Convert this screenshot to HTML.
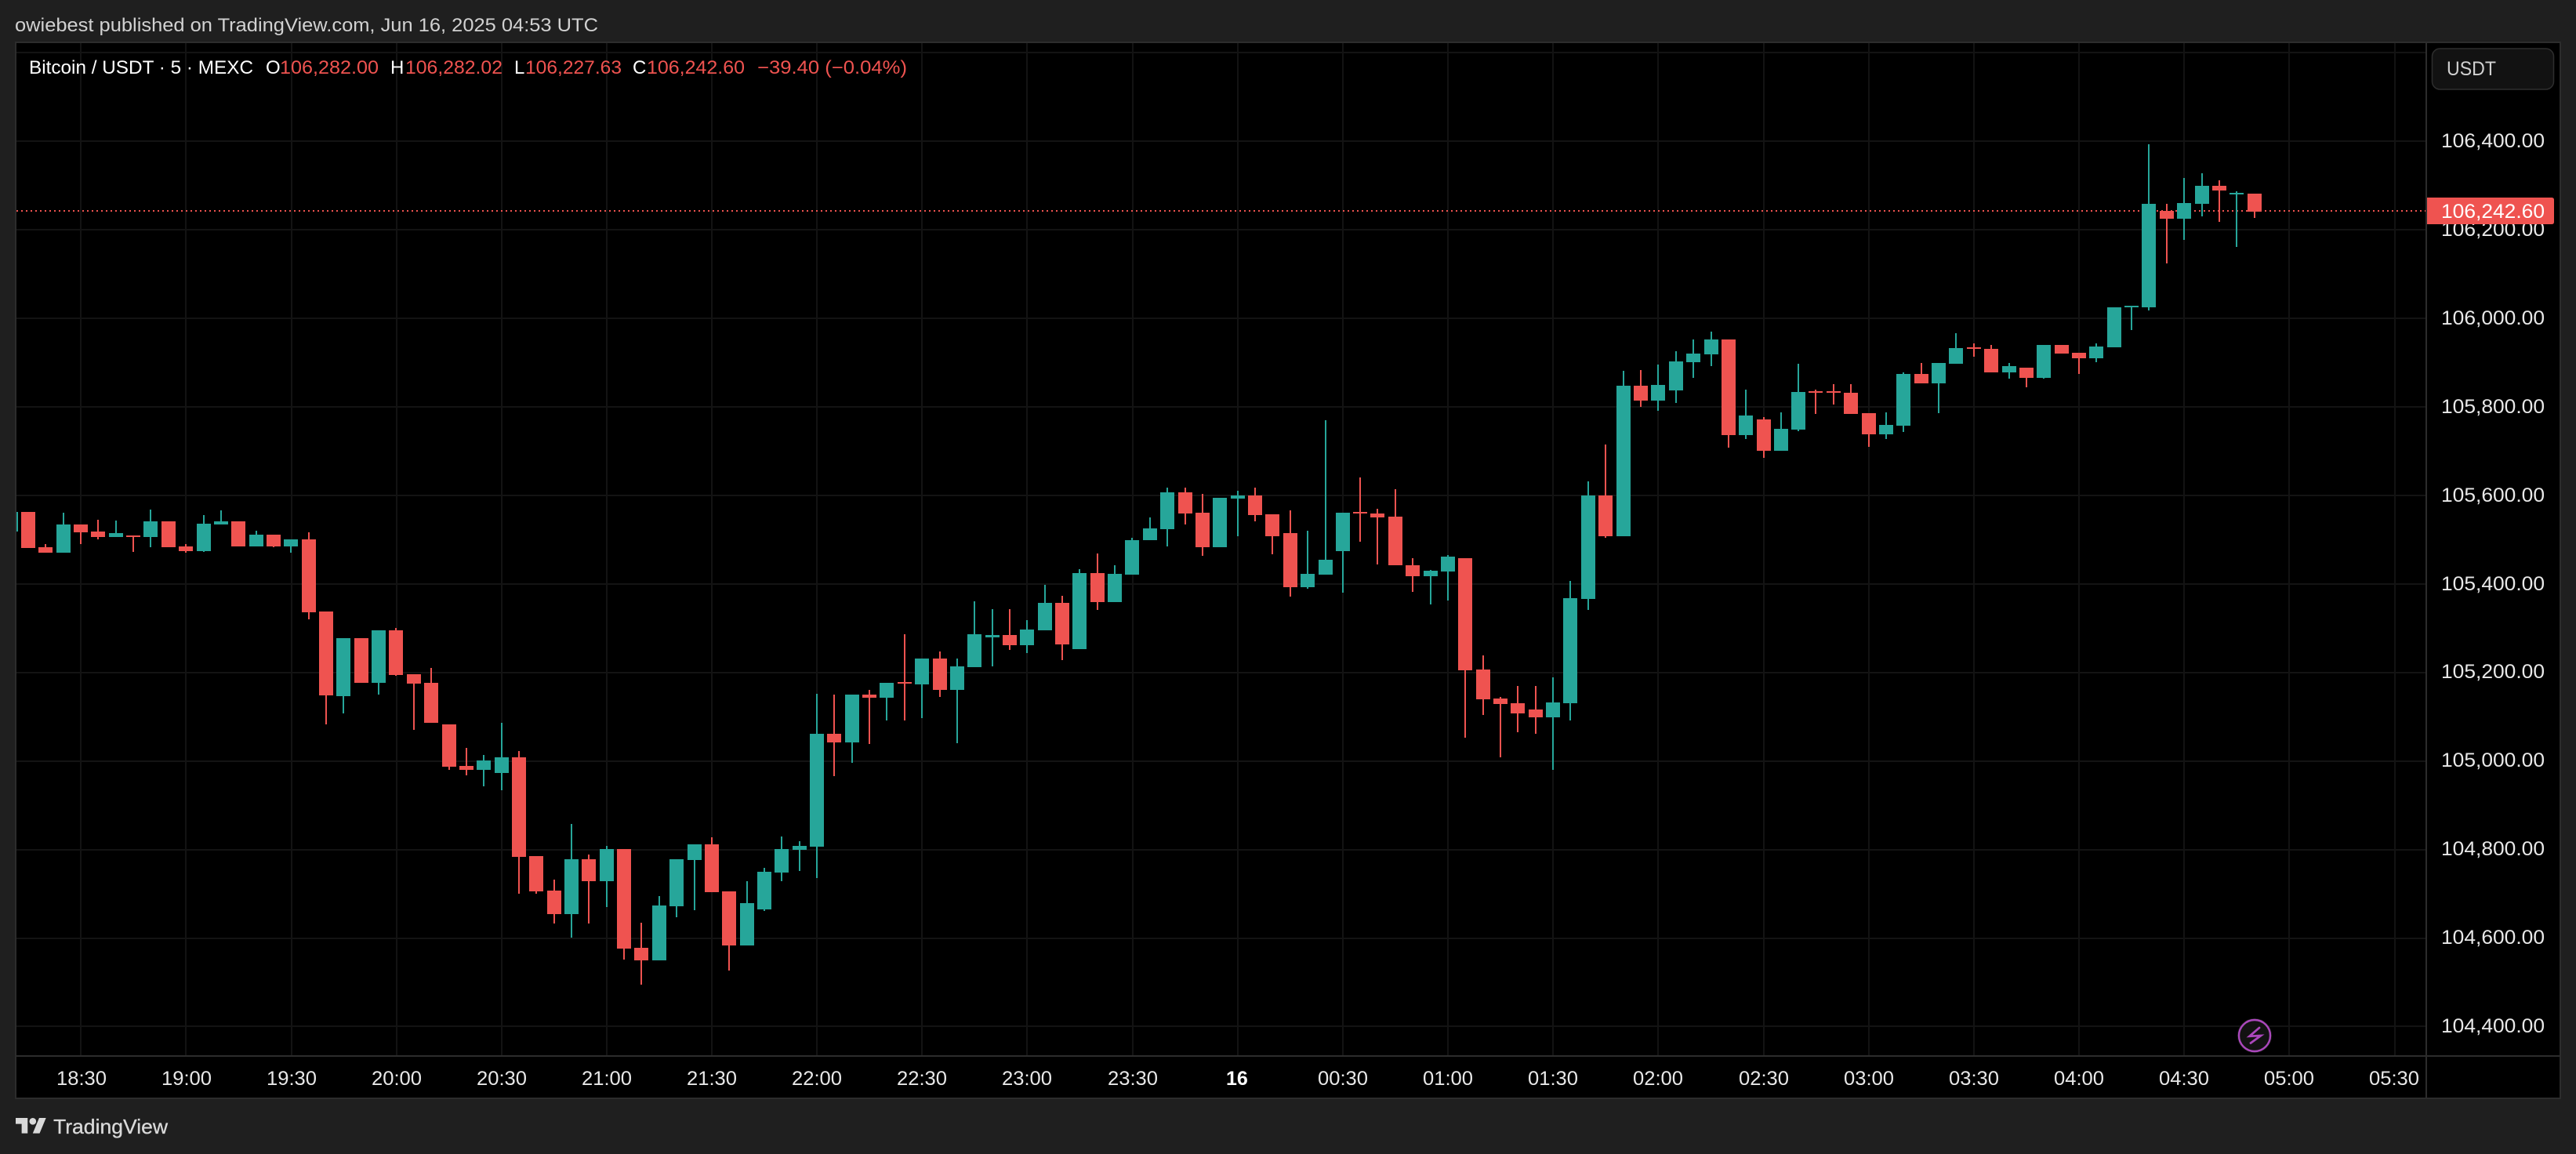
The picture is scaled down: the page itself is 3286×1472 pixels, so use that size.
<!DOCTYPE html>
<html lang="en">
<head>
<meta charset="utf-8">
<title>Bitcoin / USDT chart</title>
<style>
html,body{margin:0;padding:0;background:#1f1f1f;width:3286px;height:1472px;overflow:hidden}
svg{display:block;font-family:"Liberation Sans",sans-serif}
.p{font-size:25px;fill:#e8e8e8}
.t{font-size:25px;fill:#e8e8e8}
.l{font-size:24px;fill:#fff}
.v{font-size:24px;fill:#ef5350}
</style>
</head>
<body>
<svg xmlns="http://www.w3.org/2000/svg" width="3286" height="1472" viewBox="0 0 3286 1472">
<rect width="3286" height="1472" fill="#1f1f1f"/>
<rect x="20" y="54" width="3246" height="1347" fill="#000"/>
<!-- grid -->
<path fill="#131313" d="M21 66h3074v2H21zM21 179h3074v2H21zM21 292h3074v2H21zM21 405h3074v2H21zM21 518h3074v2H21zM21 631h3074v2H21zM21 744h3074v2H21zM21 857h3074v2H21zM21 970h3074v2H21zM21 1083h3074v2H21zM21 1196h3074v2H21zM21 1308h3074v2H21z
M102 54h2v1292h-2zM236 54h2v1292h-2zM371 54h2v1292h-2zM505 54h2v1292h-2zM639 54h2v1292h-2zM773 54h2v1292h-2zM907 54h2v1292h-2zM1041 54h2v1292h-2zM1175 54h2v1292h-2zM1309 54h2v1292h-2zM1444 54h2v1292h-2zM1578 54h2v1292h-2zM1712 54h2v1292h-2zM1846 54h2v1292h-2zM1980 54h2v1292h-2zM2114 54h2v1292h-2zM2249 54h2v1292h-2zM2383 54h2v1292h-2zM2517 54h2v1292h-2zM2651 54h2v1292h-2zM2785 54h2v1292h-2zM2919 54h2v1292h-2zM3054 54h2v1292h-2z"/>
<!-- last price dotted line -->
<line x1="21" y1="269" x2="3095" y2="269" stroke="#ef5350" stroke-width="2" stroke-dasharray="2 4"/>
<!-- green candles -->
<path fill="#26a69a" d="M21 653h2V678h-2z
M72 669h18V705h-18zM80 654h2V705h-2z
M139 680h18V685h-18zM147 664h2V685h-2z
M183 665h18V685h-18zM191 650h2V698h-2z
M251 668h18V703h-18zM259 657h2V704h-2z
M273 665h18V669h-18zM281 651h2V669h-2z
M318 682h18V697h-18zM326 677h2V697h-2z
M362 688h18V697h-18zM370 688h2V705h-2z
M429 814h18V888h-18zM437 814h2V910h-2z
M474 804h18V871h-18zM482 804h2V886h-2z
M608 970h18V982h-18zM616 963h2V1003h-2z
M631 966h18V986h-18zM639 922h2V1008h-2z
M720 1096h18V1166h-18zM728 1051h2V1196h-2z
M765 1083h18V1124h-18zM773 1079h2V1157h-2z
M832 1155h18V1225h-18zM840 1143h2V1225h-2z
M854 1096h18V1156h-18zM862 1096h2V1170h-2z
M877 1077h18V1097h-18zM885 1077h2V1161h-2z
M944 1152h18V1206h-18zM952 1124h2V1206h-2z
M966 1112h18V1160h-18zM974 1107h2V1162h-2z
M988 1083h18V1113h-18zM996 1067h2V1124h-2z
M1011 1079h18V1084h-18zM1019 1073h2V1111h-2z
M1033 936h18V1080h-18zM1041 885h2V1120h-2z
M1078 886h18V947h-18zM1086 886h2V973h-2z
M1122 871h18V890h-18zM1130 871h2V919h-2z
M1167 840h18V873h-18zM1175 840h2V916h-2z
M1212 850h18V880h-18zM1220 840h2V948h-2z
M1234 809h18V851h-18zM1242 767h2V851h-2z
M1257 810h18V813h-18zM1265 777h2V850h-2z
M1301 803h18V823h-18zM1309 791h2V833h-2z
M1324 769h18V804h-18zM1332 746h2V804h-2z
M1368 731h18V828h-18zM1376 726h2V828h-2z
M1413 732h18V768h-18zM1421 721h2V768h-2z
M1435 689h18V733h-18zM1443 686h2V733h-2z
M1458 674h18V689h-18zM1466 660h2V689h-2z
M1480 628h18V675h-18zM1488 622h2V697h-2z
M1547 635h18V698h-18z
M1570 632h18V636h-18zM1578 626h2V684h-2z
M1659 732h18V749h-18zM1667 677h2V751h-2z
M1682 714h18V733h-18zM1690 536h2V733h-2z
M1704 654h18V703h-18zM1712 654h2V756h-2z
M1816 728h18V735h-18zM1824 727h2V771h-2z
M1838 710h18V729h-18zM1846 708h2V766h-2z
M1972 896h18V915h-18zM1980 864h2V982h-2z
M1994 763h18V897h-18zM2002 741h2V919h-2z
M2017 632h18V764h-18zM2025 614h2V778h-2z
M2062 492h18V684h-18zM2070 473h2V684h-2z
M2106 491h18V511h-18zM2114 465h2V524h-2z
M2129 461h18V498h-18zM2137 448h2V514h-2z
M2151 451h18V462h-18zM2159 433h2V482h-2z
M2174 433h18V452h-18zM2182 423h2V467h-2z
M2218 530h18V555h-18zM2226 497h2V560h-2z
M2263 547h18V575h-18zM2271 526h2V575h-2z
M2285 500h18V548h-18zM2293 464h2V550h-2z
M2397 542h18V554h-18zM2405 526h2V560h-2z
M2419 477h18V543h-18zM2427 475h2V551h-2z
M2464 463h18V489h-18zM2472 463h2V527h-2z
M2486 444h18V464h-18zM2494 425h2V464h-2z
M2554 467h18V475h-18zM2562 463h2V483h-2z
M2598 440h18V482h-18zM2606 440h2V483h-2z
M2665 442h18V457h-18zM2673 438h2V462h-2z
M2688 392h18V443h-18z
M2710 390h18V392h-18zM2718 390h2V421h-2z
M2732 260h18V392h-18zM2740 184h2V396h-2z
M2777 259h18V279h-18zM2785 227h2V306h-2z
M2800 237h18V260h-18zM2808 221h2V276h-2z
M2844 246h18V248h-18zM2852 244h2V315h-2z"/>
<!-- red candles -->
<path fill="#ef5350" d="M27 653h18V699h-18z
M49 698h18V705h-18zM57 694h2V705h-2z
M94 669h18V679h-18zM102 669h2V694h-2z
M116 678h18V685h-18zM124 663h2V688h-2z
M161 683h18V685h-18zM169 683h2V704h-2z
M206 665h18V698h-18z
M228 697h18V703h-18zM236 694h2V705h-2z
M295 665h18V697h-18z
M340 682h18V697h-18zM348 682h2V698h-2z
M385 688h18V781h-18zM393 679h2V790h-2z
M407 780h18V887h-18zM415 780h2V924h-2z
M452 814h18V871h-18z
M496 804h18V861h-18zM504 801h2V862h-2z
M519 860h18V872h-18zM527 860h2V931h-2z
M541 871h18V922h-18zM549 852h2V922h-2z
M564 924h18V978h-18zM572 924h2V982h-2z
M586 977h18V982h-18zM594 954h2V989h-2z
M653 966h18V1093h-18zM661 958h2V1140h-2z
M675 1092h18V1137h-18zM683 1092h2V1140h-2z
M698 1136h18V1166h-18zM706 1122h2V1178h-2z
M742 1096h18V1124h-18zM750 1090h2V1178h-2z
M787 1083h18V1210h-18zM795 1083h2V1224h-2z
M809 1209h18V1225h-18zM817 1177h2V1256h-2z
M899 1077h18V1138h-18zM907 1068h2V1138h-2z
M921 1137h18V1206h-18zM929 1137h2V1238h-2z
M1055 936h18V947h-18zM1063 886h2V990h-2z
M1100 886h18V890h-18zM1108 880h2V949h-2z
M1145 870h18V872h-18zM1153 809h2V919h-2z
M1190 840h18V880h-18zM1198 831h2V889h-2z
M1279 810h18V823h-18zM1287 777h2V829h-2z
M1346 769h18V822h-18zM1354 760h2V842h-2z
M1391 731h18V768h-18zM1399 706h2V778h-2z
M1503 628h18V655h-18zM1511 622h2V669h-2z
M1525 654h18V698h-18zM1533 630h2V709h-2z
M1592 632h18V657h-18zM1600 622h2V665h-2z
M1614 656h18V684h-18zM1622 656h2V707h-2z
M1637 680h18V749h-18zM1645 651h2V761h-2z
M1726 653h18V655h-18zM1734 609h2V691h-2z
M1748 655h18V660h-18zM1756 649h2V720h-2z
M1771 659h18V721h-18zM1779 624h2V721h-2z
M1793 721h18V735h-18zM1801 712h2V755h-2z
M1860 712h18V855h-18zM1868 712h2V941h-2z
M1883 854h18V892h-18zM1891 836h2V912h-2z
M1905 891h18V898h-18zM1913 889h2V966h-2z
M1927 897h18V910h-18zM1935 875h2V934h-2z
M1950 905h18V915h-18zM1958 875h2V936h-2z
M2039 632h18V684h-18zM2047 567h2V686h-2z
M2084 492h18V511h-18zM2092 472h2V519h-2z
M2196 433h18V555h-18zM2204 433h2V571h-2z
M2241 535h18V575h-18zM2249 532h2V584h-2z
M2307 499h18V501h-18zM2315 497h2V528h-2z
M2330 499h18V501h-18zM2338 490h2V516h-2z
M2352 501h18V528h-18zM2360 490h2V528h-2z
M2375 527h18V554h-18zM2383 527h2V570h-2z
M2442 477h18V489h-18zM2450 463h2V489h-2z
M2509 443h18V445h-18zM2517 438h2V455h-2z
M2531 445h18V475h-18zM2539 440h2V475h-2z
M2576 469h18V482h-18zM2584 469h2V494h-2z
M2621 440h18V451h-18z
M2643 450h18V457h-18zM2651 450h2V477h-2z
M2755 269h18V279h-18zM2763 260h2V336h-2z
M2822 237h18V243h-18zM2830 230h2V283h-2z
M2867 247h18V270h-18zM2875 247h2V278h-2z"/>
<!-- borders -->
<path fill="#2c2c2c" d="M19 53h3248v2H19zM19 1400h3248v2H19zM19 53h2v1349h-2zM3265 53h2v1349h-2zM3094 53h2v1349h-2zM19 1346h3248v2H19z"/>
<!-- header -->
<text x="19" y="40" font-size="24" fill="#d1d1d1" textLength="744" lengthAdjust="spacingAndGlyphs">owiebest published on TradingView.com, Jun 16, 2025 04:53 UTC</text>
<!-- legend -->
<text class="l" x="37" y="94" textLength="286" lengthAdjust="spacingAndGlyphs">Bitcoin / USDT · 5 · MEXC</text>
<text class="l" x="339" y="94">O</text>
<text class="v" x="357" y="94" textLength="126" lengthAdjust="spacingAndGlyphs">106,282.00</text>
<text class="l" x="498" y="94">H</text>
<text class="v" x="517" y="94" textLength="124" lengthAdjust="spacingAndGlyphs">106,282.02</text>
<text class="l" x="656" y="94">L</text>
<text class="v" x="670" y="94" textLength="123" lengthAdjust="spacingAndGlyphs">106,227.63</text>
<text class="l" x="807" y="94">C</text>
<text class="v" x="825" y="94" textLength="125" lengthAdjust="spacingAndGlyphs">106,242.60</text>
<text class="v" x="966" y="94" textLength="191" lengthAdjust="spacingAndGlyphs">−39.40 (−0.04%)</text>
<!-- USDT button -->
<rect x="3102.5" y="62" width="155" height="52" rx="10" fill="#121212" stroke="#2e2e2e" stroke-width="1.5"/>
<text x="3121" y="96" font-size="25" fill="#d1d1d1" textLength="63" lengthAdjust="spacingAndGlyphs">USDT</text>
<!-- price axis -->
<text class="p" x="3114" y="188" textLength="132" lengthAdjust="spacingAndGlyphs">106,400.00</text>
<text class="p" x="3114" y="301" textLength="132" lengthAdjust="spacingAndGlyphs">106,200.00</text>
<text class="p" x="3114" y="414" textLength="132" lengthAdjust="spacingAndGlyphs">106,000.00</text>
<text class="p" x="3114" y="527" textLength="132" lengthAdjust="spacingAndGlyphs">105,800.00</text>
<text class="p" x="3114" y="640" textLength="132" lengthAdjust="spacingAndGlyphs">105,600.00</text>
<text class="p" x="3114" y="753" textLength="132" lengthAdjust="spacingAndGlyphs">105,400.00</text>
<text class="p" x="3114" y="865" textLength="132" lengthAdjust="spacingAndGlyphs">105,200.00</text>
<text class="p" x="3114" y="978" textLength="132" lengthAdjust="spacingAndGlyphs">105,000.00</text>
<text class="p" x="3114" y="1091" textLength="132" lengthAdjust="spacingAndGlyphs">104,800.00</text>
<text class="p" x="3114" y="1204" textLength="132" lengthAdjust="spacingAndGlyphs">104,600.00</text>
<text class="p" x="3114" y="1317" textLength="132" lengthAdjust="spacingAndGlyphs">104,400.00</text>
<!-- last price label -->
<path fill="#ef5350" d="M3096 252h159q3 0 3 3v28q0 3-3 3h-159z"/>
<text x="3114" y="278" font-size="25" fill="#fff" textLength="132" lengthAdjust="spacingAndGlyphs">106,242.60</text>
<!-- time axis -->
<text class="t" x="72" y="1384" textLength="64" lengthAdjust="spacingAndGlyphs">18:30</text>
<text class="t" x="206" y="1384" textLength="64" lengthAdjust="spacingAndGlyphs">19:00</text>
<text class="t" x="340" y="1384" textLength="64" lengthAdjust="spacingAndGlyphs">19:30</text>
<text class="t" x="474" y="1384" textLength="64" lengthAdjust="spacingAndGlyphs">20:00</text>
<text class="t" x="608" y="1384" textLength="64" lengthAdjust="spacingAndGlyphs">20:30</text>
<text class="t" x="742" y="1384" textLength="64" lengthAdjust="spacingAndGlyphs">21:00</text>
<text class="t" x="876" y="1384" textLength="64" lengthAdjust="spacingAndGlyphs">21:30</text>
<text class="t" x="1010" y="1384" textLength="64" lengthAdjust="spacingAndGlyphs">22:00</text>
<text class="t" x="1144" y="1384" textLength="64" lengthAdjust="spacingAndGlyphs">22:30</text>
<text class="t" x="1278" y="1384" textLength="64" lengthAdjust="spacingAndGlyphs">23:00</text>
<text class="t" x="1413" y="1384" textLength="64" lengthAdjust="spacingAndGlyphs">23:30</text>
<text x="1564" y="1384" font-size="25" font-weight="700" fill="#fff">16</text>
<text class="t" x="1681" y="1384" textLength="64" lengthAdjust="spacingAndGlyphs">00:30</text>
<text class="t" x="1815" y="1384" textLength="64" lengthAdjust="spacingAndGlyphs">01:00</text>
<text class="t" x="1949" y="1384" textLength="64" lengthAdjust="spacingAndGlyphs">01:30</text>
<text class="t" x="2083" y="1384" textLength="64" lengthAdjust="spacingAndGlyphs">02:00</text>
<text class="t" x="2218" y="1384" textLength="64" lengthAdjust="spacingAndGlyphs">02:30</text>
<text class="t" x="2352" y="1384" textLength="64" lengthAdjust="spacingAndGlyphs">03:00</text>
<text class="t" x="2486" y="1384" textLength="64" lengthAdjust="spacingAndGlyphs">03:30</text>
<text class="t" x="2620" y="1384" textLength="64" lengthAdjust="spacingAndGlyphs">04:00</text>
<text class="t" x="2754" y="1384" textLength="64" lengthAdjust="spacingAndGlyphs">04:30</text>
<text class="t" x="2888" y="1384" textLength="64" lengthAdjust="spacingAndGlyphs">05:00</text>
<text class="t" x="3022" y="1384" textLength="64" lengthAdjust="spacingAndGlyphs">05:30</text>
<!-- lightning badge -->
<circle cx="2876" cy="1321" r="22" fill="#1a1a1a"/>
<circle cx="2876" cy="1321" r="20" fill="#121212" stroke="#ab47bc" stroke-width="2.4"/>
<path d="M2882 1311L2869.5 1321.8L2884 1321L2871 1330.5" fill="none" stroke="#ab47bc" stroke-width="2.8" stroke-linejoin="miter" stroke-linecap="round"/>
<!-- footer logo -->
<g transform="translate(20 1421.6) scale(1.09)" fill="#d9d9d9">
<path d="M14 22H7V11H0V4h14v18zM28 22h-8l7.5-18h8L28 22z"/>
<circle cx="20" cy="8" r="4"/>
</g>
<text x="68" y="1446" font-size="26" fill="#d9d9d9" stroke="#d9d9d9" stroke-width="0.3" textLength="146" lengthAdjust="spacingAndGlyphs">TradingView</text>
</svg>
</body>
</html>
